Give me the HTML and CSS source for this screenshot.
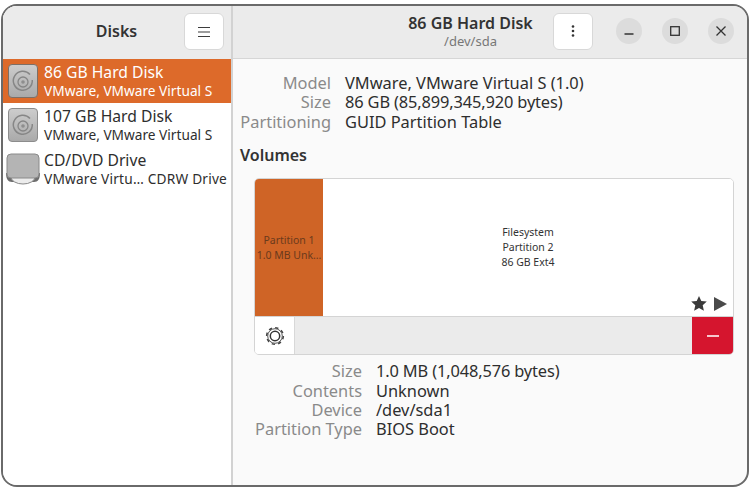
FILE: index.html
```html
<!DOCTYPE html>
<html lang="en">
<head>
	<meta charset="UTF-8">
	<title>Disks</title>
	<link rel="stylesheet" href="styles.css">
</head>
<body>
	<div class="window">
		<aside class="sidebar">
			<header class="side-head">
				<h1>Disks</h1>
				<div class="btn menu-btn">
					<svg width="14" height="12" viewBox="0 0 14 12"><path d="M1 1.500h12M1 6h12M1 10.500h12" stroke="#3d3d3d" stroke-width="1.200" fill="none"/></svg>
				</div>
			</header>
			<ul class="drives">
				<li class="drive active">
					<svg class="disk-icon" width="30" height="34" viewBox="0 0 30 34"><defs><linearGradient id="hd" x1="0" y1="0" x2="0" y2="1"><stop offset="0" stop-color="#cdcdcd"/><stop offset="1" stop-color="#a9a9a9"/></linearGradient></defs><rect x="0.500" y="0.500" width="29" height="33" rx="3.500" fill="url(#hd)" stroke="#7d6f66"/><path d="M22 10.500A9.500 9.500 0 1 0 24.300 16" fill="none" stroke="#868686" stroke-width="1.500"/><circle cx="15" cy="18" r="5" fill="none" stroke="#868686" stroke-width="1.300"/><circle cx="15" cy="18" r="1.800" fill="#8e8e8e"/></svg>
					<div class="drive-text"><b>86 GB Hard Disk</b><span>VMware, VMware Virtual S</span></div>
				</li>
				<li class="drive">
					<svg class="disk-icon" width="30" height="34" viewBox="0 0 30 34"><rect x="0.500" y="0.500" width="29" height="33" rx="3.500" fill="url(#hd)" stroke="#8c8c8c"/><path d="M22 10.500A9.500 9.500 0 1 0 24.300 16" fill="none" stroke="#868686" stroke-width="1.500"/><circle cx="15" cy="18" r="5" fill="none" stroke="#868686" stroke-width="1.300"/><circle cx="15" cy="18" r="1.800" fill="#8e8e8e"/></svg>
					<div class="drive-text"><b>107 GB Hard Disk</b><span>VMware, VMware Virtual S</span></div>
				</li>
				<li class="drive cd">
					<svg class="cd-icon" width="36" height="32" viewBox="0 0 36 32"><path d="M1 20c0 6 2 9 6 9h22c4 0 6-3 6-9z" fill="#6e6e6e"/><ellipse cx="18" cy="24" rx="12" ry="7" fill="#ececec" stroke="#888"/><rect x="2" y="1" width="32" height="24" rx="4" fill="#b4b4b4" stroke="#8a8a8a"/></svg>
					<div class="drive-text"><b>CD/DVD Drive</b><span>VMware Virtu… CDRW Drive</span></div>
				</li>
			</ul>
		</aside>
		<main class="content">
			<header class="main-head">
				<div class="title">
					<h2>86 GB Hard Disk</h2>
					<p>/dev/sda</p>
				</div>
				<div class="btn dots-btn">
					<svg width="4" height="12" viewBox="0 0 4 12"><circle cx="2" cy="1.500" r="1.300" fill="#333"/><circle cx="2" cy="6" r="1.300" fill="#333"/><circle cx="2" cy="10.500" r="1.300" fill="#333"/></svg>
				</div>
				<div class="win-btns">
					<div class="round"><svg width="10" height="10" viewBox="0 0 10 10"><path d="M0.500 8h9" stroke="#333" stroke-width="1.300"/></svg></div>
					<div class="round"><svg width="10" height="10" viewBox="0 0 10 10"><rect x="0.700" y="0.700" width="8.600" height="8.600" fill="none" stroke="#333" stroke-width="1.300"/></svg></div>
					<div class="round"><svg width="10" height="10" viewBox="0 0 10 10"><path d="M0.500 0.500l9 9M9.500 0.500l-9 9" stroke="#333" stroke-width="1.300"/></svg></div>
				</div>
			</header>
			<div class="body">
				<dl class="props disk-props">
					<dt>Model</dt><dd>VMware, VMware Virtual S (1.0)</dd>
					<dt>Size</dt><dd class="num">86 GB (85,899,345,920 bytes)</dd>
					<dt>Partitioning</dt><dd>GUID Partition Table</dd>
				</dl>
				<h3>Volumes</h3>
				<section class="volumes">
					<div class="parts">
						<div class="part p1">Partition 1<br>1.0 MB Unk…</div>
						<div class="part p2">
							Filesystem<br>Partition 2<br>86 GB Ext4
							<div class="flags">
								<svg width="16" height="15" viewBox="0 0 16 15"><path d="M8 0l2.300 5 5.500.6-4.100 3.700 1.200 5.400L8 12 3.100 14.700l1.200-5.400L.2 5.600 5.700 5z" fill="#3a3a3a"/></svg>
								<svg width="13" height="14" viewBox="0 0 13 14"><path d="M0 0l13 7-13 7z" fill="#4a4a4a"/></svg>
							</div>
						</div>
					</div>
					<div class="toolbar">
						<div class="gear">
							<svg width="20" height="20" viewBox="0 0 20 20"><circle cx="10" cy="10" r="8.300" fill="none" stroke="#444" stroke-width="1.600" stroke-dasharray="3.300 3.200"/><circle cx="10" cy="10" r="7.300" fill="#fff" stroke="#555" stroke-width="1"/><circle cx="10" cy="10" r="4.700" fill="none" stroke="#333" stroke-width="1.500"/></svg>
						</div>
						<div class="del"><i></i></div>
					</div>
				</section>
				<dl class="props part-props">
					<dt>Size</dt><dd class="num">1.0 MB (1,048,576 bytes)</dd>
					<dt>Contents</dt><dd>Unknown</dd>
					<dt>Device</dt><dd>/dev/sda1</dd>
					<dt>Partition Type</dt><dd>BIOS Boot</dd>
				</dl>
			</div>
		</main>
	</div>
</body>
</html>
```

FILE: styles.css
```css
*{
	margin: 0;
	padding: 0;
	box-sizing: border-box;
	list-style: none;
}
body{
	width: 750px;
	height: 490px;
	background: #fff;
	font-family: "Noto Sans", sans-serif;
	color: #2e2e2e;
	overflow: hidden;
	padding: 4px 1px 3px 1px;
}
.window{
	display: flex;
	height: 100%;
	border: 2px solid #6a6a6a;
	border-radius: 16px;
	overflow: hidden;
	background: #fafafa;
}
.sidebar{
	width: 230px;
	flex: none;
	background: #fff;
	border-right: 2px solid #d2d2d2;
}
.side-head{
	height: 53px;
	padding-bottom: 4px;
	background: #ebebeb;
	display: flex;
	align-items: center;
	position: relative;
}
.side-head h1{
	font-size: 16px;
	font-weight: 600;
	width: 227px;
	text-align: center;
	color: #333;
}
.btn{
	width: 40px;
	height: 37px;
	background: #fff;
	border: 1px solid #d8d8d8;
	border-radius: 6px;
	display: flex;
	align-items: center;
	justify-content: center;
	flex: none;
}
.menu-btn{
	position: absolute;
	left: 181px;
	top: 7px;
}
.drive{
	height: 44px;
	display: flex;
	align-items: center;
	gap: 6px;
	padding-left: 5px;
}
.drive.active{
	background: #dd6a2a;
	color: #fff;
}
.drive.cd{
	padding-left: 2px;
	gap: 3px;
}
.drive.cd span{
	letter-spacing: 0.2px;
}
.drive-text b{
	display: block;
	font-weight: 400;
	font-size: 15.700px;
	line-height: 19px;
}
.drive-text span{
	display: block;
	font-size: 13.700px;
	line-height: 17px;
	white-space: nowrap;
}
.content{
	flex: 1;
	min-width: 0;
}
.main-head{
	height: 53px;
	padding-bottom: 2px;
	background: #ebebeb;
	border-bottom: 1px solid #d6d6d6;
	display: flex;
	align-items: center;
	position: relative;
}
.title{
	position: absolute;
	left: 170px;
	top: 8px;
	width: 135px;
	text-align: center;
}
.title h2{
	font-size: 16px;
	font-weight: 600;
	line-height: 19px;
	color: #333;
	white-space: nowrap;
}
.title p{
	font-size: 13px;
	line-height: 16px;
	color: #777;
}
.dots-btn{
	margin-left: 320px;
}
.win-btns{
	display: flex;
	gap: 20px;
	margin-left: 23px;
}
.round{
	width: 26px;
	height: 26px;
	border-radius: 50%;
	background: #dcdcdc;
	display: flex;
	align-items: center;
	justify-content: center;
}
.body{
	padding: 14px 15px 0 7px;
}
.props{
	display: grid;
	font-size: 16.400px;
	line-height: 19.400px;
}
.props dt{
	color: #8a8a8a;
	text-align: right;
	white-space: nowrap;
}
.props .num{
	letter-spacing: -0.140px;
}
.disk-props{
	grid-template-columns: 91px 1fr;
	column-gap: 14px;
}
.part-props{
	grid-template-columns: 122px 1fr;
	column-gap: 14px;
}
.body h3{
	font-size: 16px;
	font-weight: 600;
	margin-top: 14px;
	line-height: 20px;
	color: #333;
}
.volumes{
	margin: 13px 0 6px 14px;
	width: 480px;
	border: 1px solid #d4d4d4;
	border-radius: 5px;
	overflow: hidden;
	background: #fff;
}
.parts{
	display: flex;
	height: 137px;
	font-size: 10.500px;
	line-height: 15px;
	text-align: center;
}
.part{
	display: flex;
	flex-direction: column;
	justify-content: center;
	position: relative;
	color: #333;
}
.p1{
	width: 68px;
	background: #cf6426;
	color: #6b3a1c;
	white-space: nowrap;
}
.p2{
	display: block;
	padding-top: 46px;
	flex: 1;
	background: #fff;
}
.flags{
	position: absolute;
	right: 6px;
	bottom: 5px;
	display: flex;
	gap: 7px;
	align-items: center;
}
.toolbar{
	display: flex;
	height: 38px;
	background: #ebebeb;
	border-top: 1px solid #d4d4d4;
	justify-content: space-between;
}
.gear{
	width: 40px;
	background: #fff;
	border-right: 1px solid #d8d8d8;
	display: flex;
	align-items: center;
	justify-content: center;
}
.del{
	width: 41px;
	background: #d5152e;
	display: flex;
	align-items: center;
	justify-content: center;
}
.del i{
	display: block;
	width: 12px;
	height: 2px;
	background: #f6c7cd;
}
```
